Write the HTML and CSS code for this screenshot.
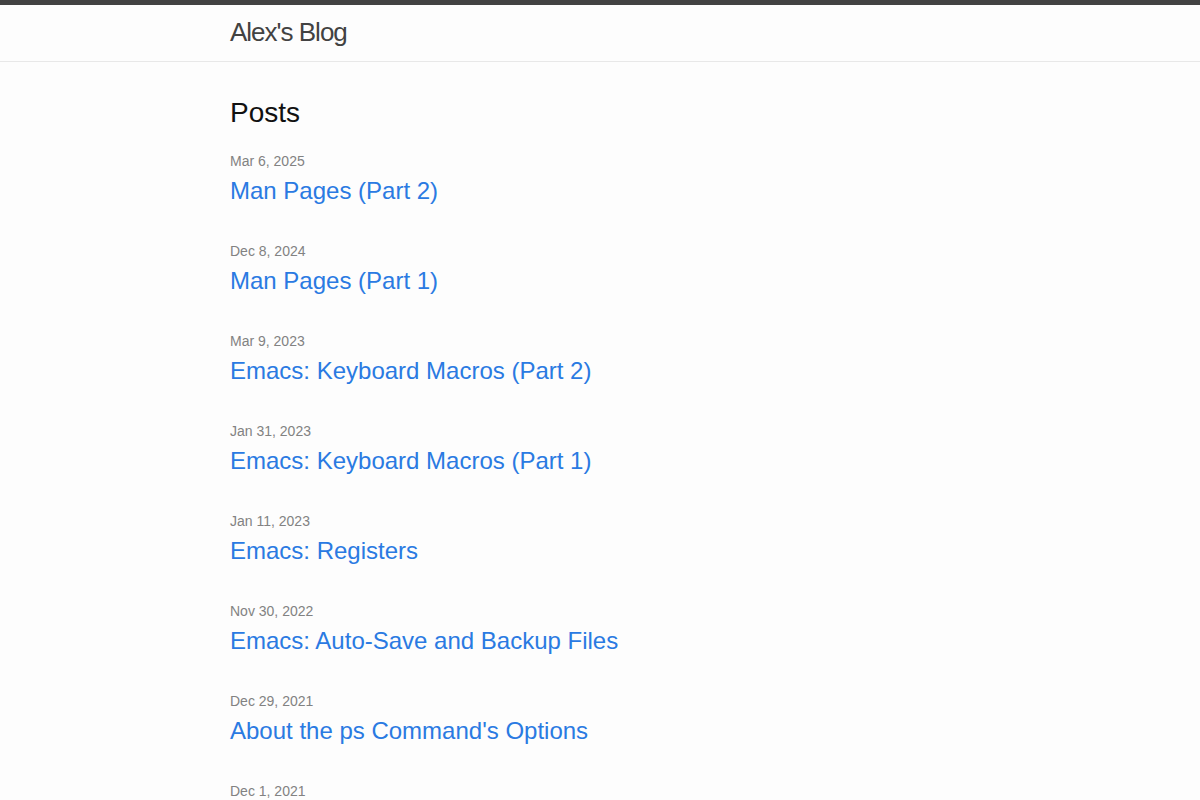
FILE: index.html
```html
<!DOCTYPE html>
<html lang="en">
<head>
    <meta charset="UTF-8">
    <meta name="viewport" content="width=device-width, initial-scale=1.0">
    <title>Alex's Blog</title>
    <link rel="stylesheet" href="styles.css">
</head>
<body>

    <!-- Site Header -->
    <header class="site-header">
        <div class="wrapper">
            <a class="site-title" href="#">Alex's Blog</a>
        </div>
    </header>

    <main class="page-content">
        <div class="wrapper">
            <h2 class="post-list-heading">Posts</h2>
            <ul class="post-list">
                <li>
                    <span class="post-meta">Mar 6, 2025</span>
                    <h3><a class="post-link" href="#">Man Pages (Part 2)</a></h3>
                </li>
                <li>
                    <span class="post-meta">Dec 8, 2024</span>
                    <h3><a class="post-link" href="#">Man Pages (Part 1)</a></h3>
                </li>
                <li>
                    <span class="post-meta">Mar 9, 2023</span>
                    <h3><a class="post-link" href="#">Emacs: Keyboard Macros (Part 2)</a></h3>
                </li>
                <li>
                    <span class="post-meta">Jan 31, 2023</span>
                    <h3><a class="post-link" href="#">Emacs: Keyboard Macros (Part 1)</a></h3>
                </li>
                <li>
                    <span class="post-meta">Jan 11, 2023</span>
                    <h3><a class="post-link" href="#">Emacs: Registers</a></h3>
                </li>
                <li>
                    <span class="post-meta">Nov 30, 2022</span>
                    <h3><a class="post-link" href="#">Emacs: Auto-Save and Backup Files</a></h3>
                </li>
                <li>
                    <span class="post-meta">Dec 29, 2021</span>
                    <h3><a class="post-link" href="#">About the ps Command's Options</a></h3>
                </li>
                <li>
                    <span class="post-meta">Dec 1, 2021</span>
                    <h3><a class="post-link" href="#">Emacs: Bookmarks</a></h3>
                </li>
            </ul>
        </div>
    </main>

</body>
</html>
```

FILE: styles.css
```css
/* Base */
* {
    margin: 0;
    padding: 0;
    box-sizing: border-box;
}

body {
    font: 400 16px/1.5 "Liberation Sans", Helvetica, Arial, sans-serif;
    color: #111;
    background-color: #fdfdfd;
}

a {
    text-decoration: none;
}

.wrapper {
    max-width: 800px;
    margin: 0 auto;
    padding: 0 30px;
}

/* Header */
.site-header {
    border-top: 5px solid #424242;
    border-bottom: 1px solid #e8e8e8;
    min-height: 62px;
}

.site-title {
    font-size: 26px;
    font-weight: 300;
    line-height: 54px;
    letter-spacing: -1px;
    color: #424242;
}

/* Post list */
.page-content {
    padding: 30px 0;
}

.post-list-heading {
    font-size: 28px;
    font-weight: 400;
    line-height: 42px;
    margin-bottom: 17px;
}

.post-list {
    list-style: none;
}

.post-list li {
    margin-bottom: 31px;
}

.post-meta {
    display: block;
    font-size: 14px;
    line-height: 21px;
    color: #828282;
}

.post-list h3 {
    font-weight: 400;
}

.post-link {
    display: block;
    font-size: 24px;
    line-height: 38px;
    color: #2a7ae2;
}
```
